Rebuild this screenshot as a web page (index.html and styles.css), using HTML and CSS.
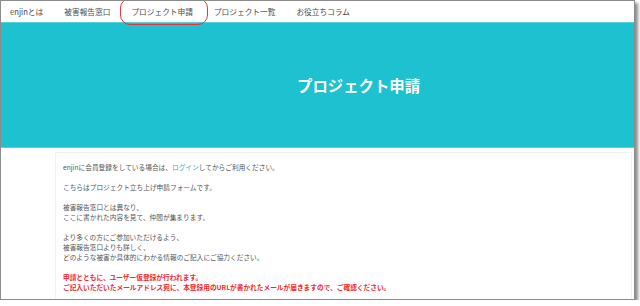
FILE: index.html
```html
<!DOCTYPE html>
<html lang="ja">
<head>
  <meta charset="UTF-8">
  <title>プロジェクト申請 | enjin</title>
  <link rel="stylesheet" href="styles.css">
</head>
<body>

  <div class="frame">
    <nav class="nav">
      <a href="#">enjinとは</a>
      <a href="#">被害報告窓口</a>
      <a href="#" class="marked">プロジェクト申請</a>
      <a href="#">プロジェクト一覧</a>
      <a href="#">お役立ちコラム</a>
    </nav>

    <header class="hero">
      <h1>プロジェクト申請</h1>
    </header>

    <main class="content">
      <div class="intro">
        <p>enjinに会員登録をしている場合は、<a href="#" class="link">ログイン</a>してからご利用ください。</p>
        <p>こちらはプロジェクト立ち上げ申請フォームです。</p>
        <p>被害報告窓口とは異なり、<br>ここに書かれた内容を見て、仲間が集まります。</p>
        <p>より多くの方にご参加いただけるよう、<br>被害報告窓口よりも詳しく、<br>どのような被害か具体的にわかる情報のご記入にご協力ください。</p>
        <p class="notice">申請とともに、ユーザー仮登録が行われます。<br>ご記入いただいたメールアドレス宛に、本登録用のURLが書かれたメールが届きますので、ご確認ください。</p>
      </div>
    </main>
  </div>

</body>
</html>
```

FILE: styles.css
```css
body {
  margin: 0;
  background: #fff;
  font-family: "Noto Sans CJK JP", "Noto Sans", sans-serif;
}

.frame {
  width: 633px;
  height: 298px;
  border: 1px solid #8c8c8c;
  box-shadow: 3px 3px 3px rgba(0,0,0,0.45);
  overflow: hidden;
  background: #fff;
}

.nav {
  display: flex;
  gap: 21px;
  height: 21px;
  align-items: center;
  padding-left: 9px;
}

.nav a {
  position: relative;
  color: #4a4a4a;
  font-size: 7.7px;
  text-decoration: none;
}

/* red marker drawn round the current item */
.nav a.marked::after {
  content: "";
  position: absolute;
  left: -11px;
  right: -15px;
  top: -8px;
  bottom: -8px;
  border: 1px solid #e8333d;
  border-radius: 10px;
}

.hero {
  height: 124px;
  background: #1dc1cf;
  border-top: 1px solid #55d2dc;
  border-bottom: 1px solid #55d2dc;
  display: flex;
  align-items: center;
  padding-left: 296px;
}

.hero h1 {
  margin: 0;
  color: #fff;
  font-size: 15.4px;
  font-weight: bold;
}

.content {
  padding: 4px 2px 0 54px;
}

.intro {
  border: 1px solid #f2f2f2;
  padding: 9px 7px 20px;
  color: #555;
  font-size: 6.7px;
  line-height: 10px;
}

.intro p {
  margin: 0 0 10px;
}

.link {
  color: #1cb8c8;
  text-decoration: none;
}

.notice {
  color: #f02a2a;
  font-weight: bold;
}
```
